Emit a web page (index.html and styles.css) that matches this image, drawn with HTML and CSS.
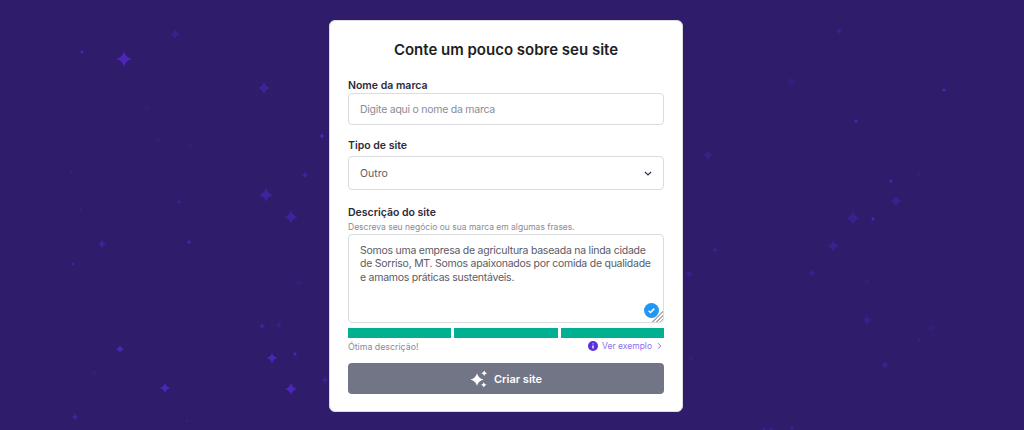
FILE: index.html
```html
<!DOCTYPE html>
<html lang="pt-BR">
<head>
<meta charset="utf-8">
<title>Conte um pouco sobre seu site</title>
<link rel="stylesheet" href="styles.css">
</head>
<body>
<svg class="stars" viewBox="0 0 1024 430" aria-hidden="true">
  <defs>
    <path id="st" d="M0 -1Q.18 -.18 1 0Q.18 .18 0 1Q-.18 .18 -1 0Q-.18 -.18 0 -1Z"/>
  </defs>
  <g class="s1">
    <use href="#st" transform="translate(124 59) scale(8)"/>
    <use href="#st" transform="translate(291 389) scale(6.5)"/>
    <use href="#st" transform="translate(272 358) scale(5.5)"/>
    <use href="#st" transform="translate(165 388) scale(5.5)"/>
    <use href="#st" transform="translate(120 349) scale(4.5)"/>
    <use href="#st" transform="translate(295 354) scale(2.5)"/>
    <use href="#st" transform="translate(322 136) scale(3)"/>
    <use href="#st" transform="translate(189 242) scale(2.5)"/>
    <use href="#st" transform="translate(82 52) scale(2.5)"/>
    <use href="#st" transform="translate(856 121) scale(2.5)"/>
    <use href="#st" transform="translate(944 90) scale(2.5)"/>
    <use href="#st" transform="translate(873 219) scale(2.5)"/>
    <use href="#st" transform="translate(891 181) scale(2.5)"/>
  </g>
  <g class="s2">
    <use href="#st" transform="translate(264 88) scale(6.5)"/>
    <use href="#st" transform="translate(266 195) scale(7.5)"/>
    <use href="#st" transform="translate(291 217) scale(7)"/>
    <use href="#st" transform="translate(305 175) scale(3.5)"/>
    <use href="#st" transform="translate(262 326) scale(4)"/>
    <use href="#st" transform="translate(102 244) scale(4.5)"/>
    <use href="#st" transform="translate(73 264) scale(2.5)"/>
    <use href="#st" transform="translate(75 417) scale(4)"/>
    <use href="#st" transform="translate(179 202) scale(2.5)"/>
    <use href="#st" transform="translate(71 172) scale(1.5)"/>
    <use href="#st" transform="translate(81 210) scale(1.5)"/>
    <use href="#st" transform="translate(187 421) scale(1.5)"/>
    <use href="#st" transform="translate(764 429) scale(2)"/>
    <use href="#st" transform="translate(771 429) scale(2)"/>
    <use href="#st" transform="translate(792 428) scale(2)"/>
  </g>
  <g class="s3">
    <use href="#st" transform="translate(853 218) scale(7.5)"/>
    <use href="#st" transform="translate(833 246) scale(6.5)"/>
    <use href="#st" transform="translate(715 250) scale(3.5)"/>
    <use href="#st" transform="translate(689 274) scale(4.5)"/>
    <use href="#st" transform="translate(812 273) scale(4)"/>
    <use href="#st" transform="translate(885 365) scale(4.5)"/>
    <use href="#st" transform="translate(919 340) scale(2.5)"/>
    <use href="#st" transform="translate(708 155) scale(5.5)"/>
    <use href="#st" transform="translate(839 31) scale(3.5)"/>
    <use href="#st" transform="translate(175 34) scale(5.5)"/>
    <use href="#st" transform="translate(279 325) scale(3.5)"/>
    <use href="#st" transform="translate(325 380) scale(4.5)"/>
    <use href="#st" transform="translate(896 201) scale(6.5)"/>
    <use href="#st" transform="translate(867 320) scale(5.5)"/>
    <use href="#st" transform="translate(278 75) scale(1.5)"/>
  </g>
  <g class="s4">
    <use href="#st" transform="translate(919 174) scale(3.5)"/>
    <use href="#st" transform="translate(867 282) scale(4.5)"/>
    <use href="#st" transform="translate(691 358) scale(4.5)"/>
    <use href="#st" transform="translate(931 328) scale(5.5)"/>
    <use href="#st" transform="translate(944 52) scale(2)"/>
    <use href="#st" transform="translate(731 226) scale(2)"/>
    <use href="#st" transform="translate(917 323) scale(1.5)"/>
    <use href="#st" transform="translate(147 107) scale(3.5)"/>
    <use href="#st" transform="translate(190 145) scale(3.5)"/>
    <use href="#st" transform="translate(158 140) scale(3.5)"/>
    <use href="#st" transform="translate(299 283) scale(5)"/>
    <use href="#st" transform="translate(94 373) scale(4.5)"/>
    <use href="#st" transform="translate(791 82) scale(6.5)"/>
  </g>
</svg>

<main class="card">
  <h1 class="title">Conte um pouco sobre seu site</h1>
  <form class="form">
    <div class="field field-name">
      <label class="label" for="brand">Nome da marca</label>
      <input class="control control-input" id="brand" type="text" placeholder="Digite aqui o nome da marca">
    </div>
    <div class="field field-type">
      <label class="label" for="type">Tipo de site</label>
      <div class="select-wrap">
        <select class="control control-select" id="type">
          <option>Outro</option>
        </select>
        <svg class="chevron" viewBox="0 0 10 6" aria-hidden="true"><path d="M1.2 1.2 5 4.8l3.8-3.6"/></svg>
      </div>
    </div>
    <div class="field field-desc">
      <label class="label" for="desc">Descrição do site</label>
      <p class="hint">Descreva seu negócio ou sua marca em algumas frases.</p>
      <div class="area-wrap">
        <textarea class="control control-area" id="desc">Somos uma empresa de agricultura baseada na linda cidade de Sorriso, MT. Somos apaixonados por comida de qualidade e amamos práticas sustentáveis.</textarea>
        <svg class="check" viewBox="0 0 16 16" aria-hidden="true"><circle cx="8" cy="8" r="8"/><path d="M4.9 8.2 7 10.2l4-4.2"/></svg>
      </div>
    </div>
    <div class="meter">
      <span class="meter-bar"></span><span class="meter-bar"></span><span class="meter-bar"></span>
    </div>
    <div class="meter-foot">
      <span class="verdict">Ótima descrição!</span>
      <a class="example" href="#">
        <svg class="info" viewBox="0 0 10 10" aria-hidden="true"><circle cx="5" cy="5" r="5"/><path d="M5 4.4v3M5 2.4v.9"/></svg>
        Ver exemplo
        <svg class="arrow" viewBox="0 0 6 10" aria-hidden="true"><path d="M1.2 1.5 4.6 5 1.2 8.5"/></svg>
      </a>
    </div>
    <button class="submit" type="button">
      <svg class="sparkle" viewBox="0 0 18 18" aria-hidden="true">
        <path d="M7 3.2Q8 8 13.6 9.6 8 11.2 7 16 6 11.2 .4 9.6 6 8 7 3.2Z"/>
        <path d="M14.2 .4Q14.7 2.7 17 3.2 14.7 3.7 14.2 6 13.7 3.7 11.4 3.2 13.7 2.7 14.2 .4Z"/>
        <path d="M13.8 12.2Q14.3 14.3 16.5 14.8 14.3 15.3 13.8 17.6 13.3 15.3 11.1 14.8 13.3 14.3 13.8 12.2Z"/>
      </svg>
      Criar site
    </button>
  </form>
</main>
</body>
</html>
```

FILE: styles.css
```css
* { box-sizing: border-box; }
html, body { margin: 0; height: 100%; }
body {
  position: relative;
  height: 430px;
  overflow: hidden;
  background: #2f1c6a;
  font-family: "Inter", "Noto Sans", sans-serif;
  color: #1d1e20;
  display: flex;
  justify-content: center;
  align-items: flex-start;
  padding: 20px 12px 0 0;
}
.stars {
  position: absolute;
  inset: 0;
  width: 1024px;
  height: 430px;
}
.s1 { fill: #4b26b8; }
.s2 { fill: #40229c; }
.s3 { fill: #3a2088; }
.s4 { fill: #351e78; }

.card {
  position: relative;
  width: 354px;
  height: 392px;
  padding: 0 18px;
  background: #fff;
  border: 1px solid #dadce0;
  border-radius: 6px;
}
.title {
  margin: 19px 0 0;
  font-size: 15px;
  line-height: 19px;
  font-weight: 600;
  text-align: center;
  color: #1d1e20;
}
.form { display: flex; flex-direction: column; margin-top: 20px; }
.field { display: flex; flex-direction: column; }
.label {
  font-size: 10.5px;
  line-height: 14px;
  font-weight: 600;
  color: #2c2b3d;
}
.control {
  width: 100%;
  border: 1px solid #dadce0;
  border-radius: 4px;
  background: #fff;
  font-family: inherit;
  font-size: 10.5px;
  color: #5a5b66;
  outline: none;
}
.control-input { height: 32px; padding: 0 11px; letter-spacing: -.25px; }
.control-input::placeholder { color: #8a8b96; opacity: 1; }
.field-type { margin-top: 14px; }
.select-wrap { position: relative; margin-top: 3px; }
.control-select { display: block; height: 34px; padding: 1px 11px 0; appearance: none; }
.chevron {
  position: absolute;
  right: 12px;
  top: 15px;
  width: 8px;
  height: 5px;
  fill: none;
  stroke: #36344d;
  stroke-width: 1.6;
}
.field-desc { margin-top: 16px; }
.hint {
  margin: 2px 0 0;
  font-size: 8.5px;
  line-height: 11px;
  color: #8a8b96;
}
.area-wrap { position: relative; margin-top: 1px; }
.control-area {
  display: block;
  height: 89px;
  padding: 9px 6px 9px 11px;
  line-height: 13.4px;
  letter-spacing: -.25px;
  resize: vertical;
}
.control-area::-webkit-resizer {
  background: linear-gradient(135deg, transparent 0 62%, #a9aab4 62% 67%, transparent 67% 76%, #a9aab4 76% 81%, transparent 81% 88%, #a9aab4 88% 93%, transparent 93%);
}
.check {
  position: absolute;
  right: 5px;
  bottom: 5px;
  width: 15px;
  height: 15px;
}
.check circle { fill: #2196f3; }
.check path { fill: none; stroke: #fff; stroke-width: 1.6; }
.meter { display: flex; gap: 3px; margin-top: 5px; }
.meter-bar { flex: 1; height: 10px; background: #00b090; }
.meter-foot {
  display: flex;
  justify-content: space-between;
  align-items: center;
  height: 16px;
  font-size: 8.8px;
}
.verdict { color: #8a8b96; }
.example {
  display: flex;
  align-items: center;
  gap: 4px;
  margin-right: 2px;
  font-size: 8.5px;
  color: #8c6ff0;
  text-decoration: none;
}
.info { width: 10px; height: 10px; }
.info circle { fill: #5b2ee0; }
.info path { stroke: #fff; stroke-width: 1.3; fill: none; }
.arrow {
  width: 5px;
  height: 8px;
  margin-left: 1px;
  fill: none;
  stroke: #8c6ff0;
  stroke-width: 1.2;
}
.submit {
  display: flex;
  align-items: center;
  justify-content: center;
  gap: 6px;
  height: 31px;
  margin-top: 9px;
  border: 0;
  border-radius: 4px;
  background: #727586;
  color: #fff;
  font-family: inherit;
  font-size: 11px;
  font-weight: 600;
}
.sparkle { width: 18px; height: 18px; fill: #fff; }
```
